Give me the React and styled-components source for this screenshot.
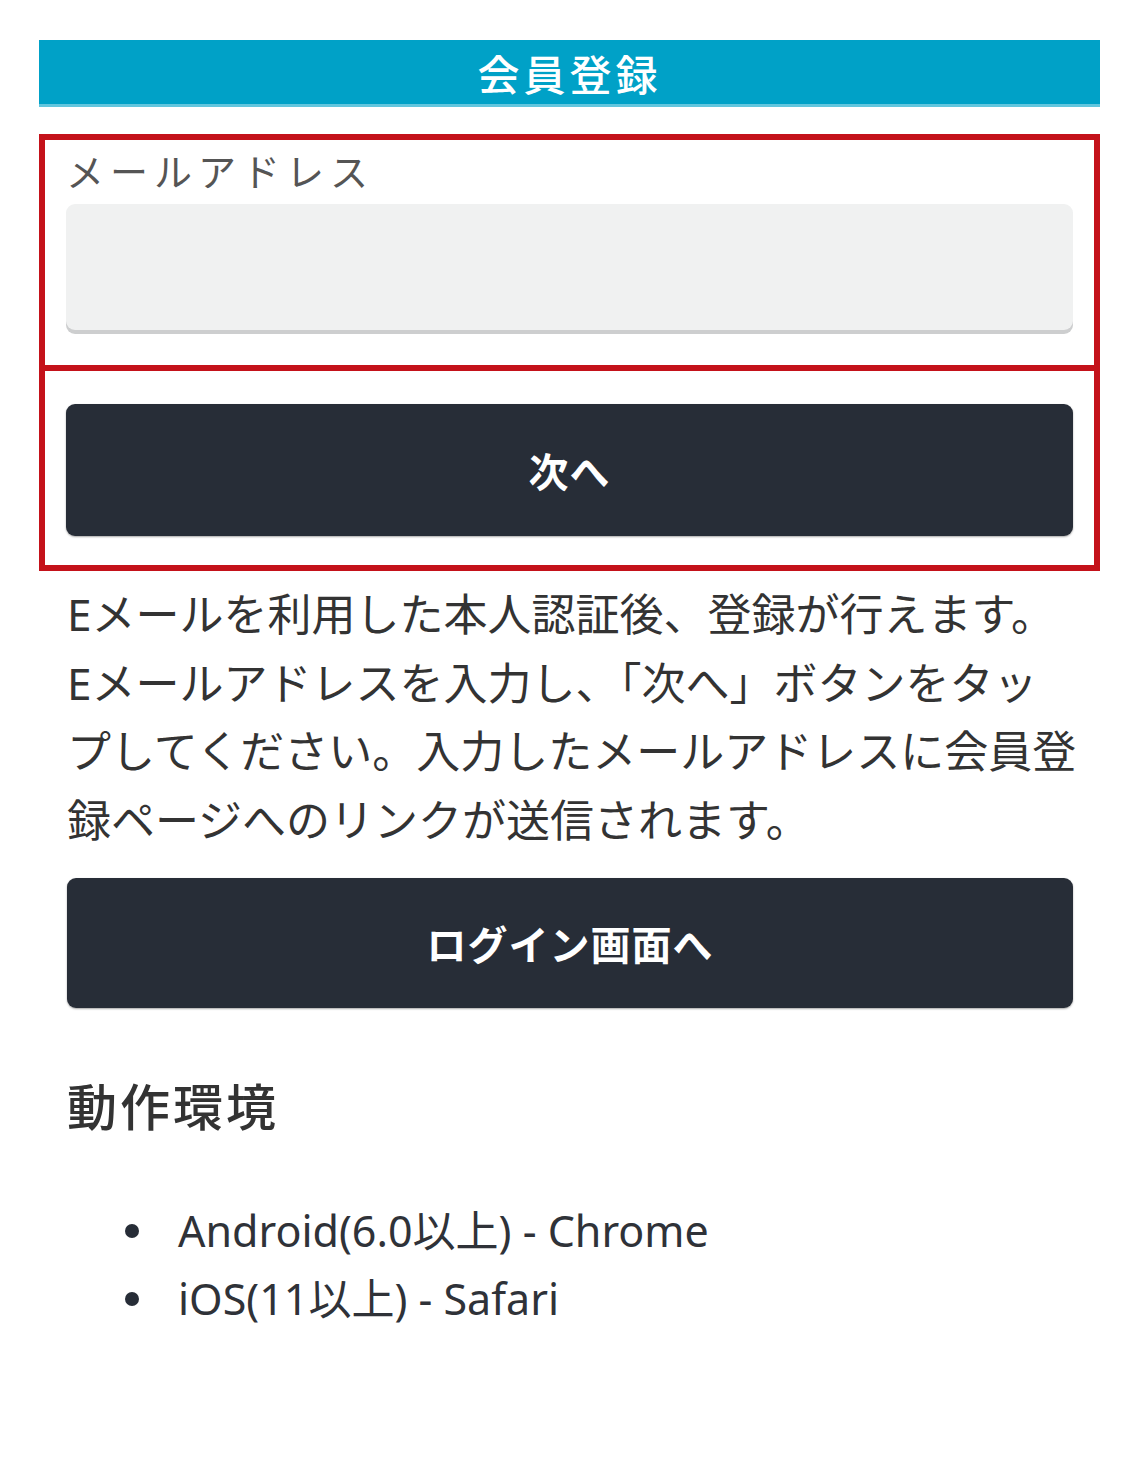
import styled, { createGlobalStyle } from "styled-components";

const GlobalStyle = createGlobalStyle`
  html, body {
    margin: 0;
    padding: 0;
    background: #ffffff;
  }
  body {
    font-family: "Noto Sans", "Noto Sans CJK JP", sans-serif;
    color: #333;
  }
`;

const Page = styled.div`
  width: 1061px;
  padding: 40px 0 0 39px;
`;

const Header = styled.h1`
  margin: 0;
  height: 64px;
  background: #00a1c7;
  border-bottom: 3px solid #62c6de;
  color: #fff;
  font-size: 42px;
  font-weight: 500;
  letter-spacing: 4px;
  display: flex;
  align-items: center;
  justify-content: center;
`;

const Outline = styled.section`
  border: 6px solid #c4121a;
  border-top-width: ${(p) => (p.$joined ? "0" : "6px")};
  padding: ${(p) => p.$pad};
`;

const FormBox = styled(Outline)`
  margin-top: 27px;
`;

const Label = styled.label`
  display: block;
  font-size: 38px;
  line-height: 49px;
  color: #555;
  letter-spacing: 6px;
  margin-bottom: 8px;
`;

const Input = styled.input`
  display: block;
  box-sizing: border-box;
  width: 100%;
  height: 126px;
  margin-bottom: 4px;
  border: none;
  border-radius: 9px;
  background: #f0f1f1;
  box-shadow: 0 4px 0 #cdcecf;
  outline: none;
`;

const DarkButton = styled.button`
  display: flex;
  align-items: center;
  justify-content: center;
  width: 100%;
  height: ${(p) => p.$h || 130}px;
  border: none;
  border-radius: 9px;
  background: #272d37;
  box-shadow: 0 1px 2px rgba(0, 0, 0, 0.35);
  color: #fff;
  font-family: "Noto Sans", "Noto Sans CJK JP", sans-serif;
  font-size: 40px;
  font-weight: 700;
  letter-spacing: 1px;
  cursor: pointer;
`;

const Body = styled.div`
  padding: 0 27px 0 28px;
`;

const Notice = styled.p`
  margin: 9px -20px 24px 0;
  font-size: 44px;
  line-height: 68.5px;
  color: #333;
`;

const SectionTitle = styled.h2`
  margin: 69px 0 60px;
  font-size: 50px;
  line-height: 60px;
  font-weight: 500;
  letter-spacing: 3px;
  color: #333;
`;

const EnvList = styled.ul`
  list-style: none;
  margin: 0;
  padding: 0 0 0 58px;
`;

const EnvItem = styled.li`
  display: flex;
  align-items: center;
  gap: 39px;
  font-size: 43px;
  line-height: 68px;
  color: #2f3238;

  &::before {
    content: "";
    flex: none;
    width: 14px;
    height: 14px;
    border-radius: 50%;
    background: #272d37;
  }
`;

const noticeLines = [
  "Eメールを利用した本人認証後、登録が行えます。",
  "Eメールアドレスを入力し、「次へ」ボタンをタッ",
  "プしてください。入力したメールアドレスに会員登",
  "録ページへのリンクが送信されます。",
];

export default function App() {
  return (
    <>
      <GlobalStyle />
      <Page>
        <Header>会員登録</Header>
        <FormBox $pad="7px 21px 31px">
          <Label htmlFor="email">メールアドレス</Label>
          <Input id="email" type="email" />
        </FormBox>
        <Outline $joined $pad="33px 21px 29px">
          <DarkButton $h={132}>次へ</DarkButton>
        </Outline>
        <Body>
          <Notice>
            {noticeLines.map((line, i) => (
              <span key={i}>
                {line}
                {i < noticeLines.length - 1 && <br />}
              </span>
            ))}
          </Notice>
          <DarkButton>ログイン画面へ</DarkButton>
          <SectionTitle>動作環境</SectionTitle>
          <EnvList>
            <EnvItem>Android(6.0以上) - Chrome</EnvItem>
            <EnvItem>iOS(11以上) - Safari</EnvItem>
          </EnvList>
        </Body>
      </Page>
    </>
  );
}
